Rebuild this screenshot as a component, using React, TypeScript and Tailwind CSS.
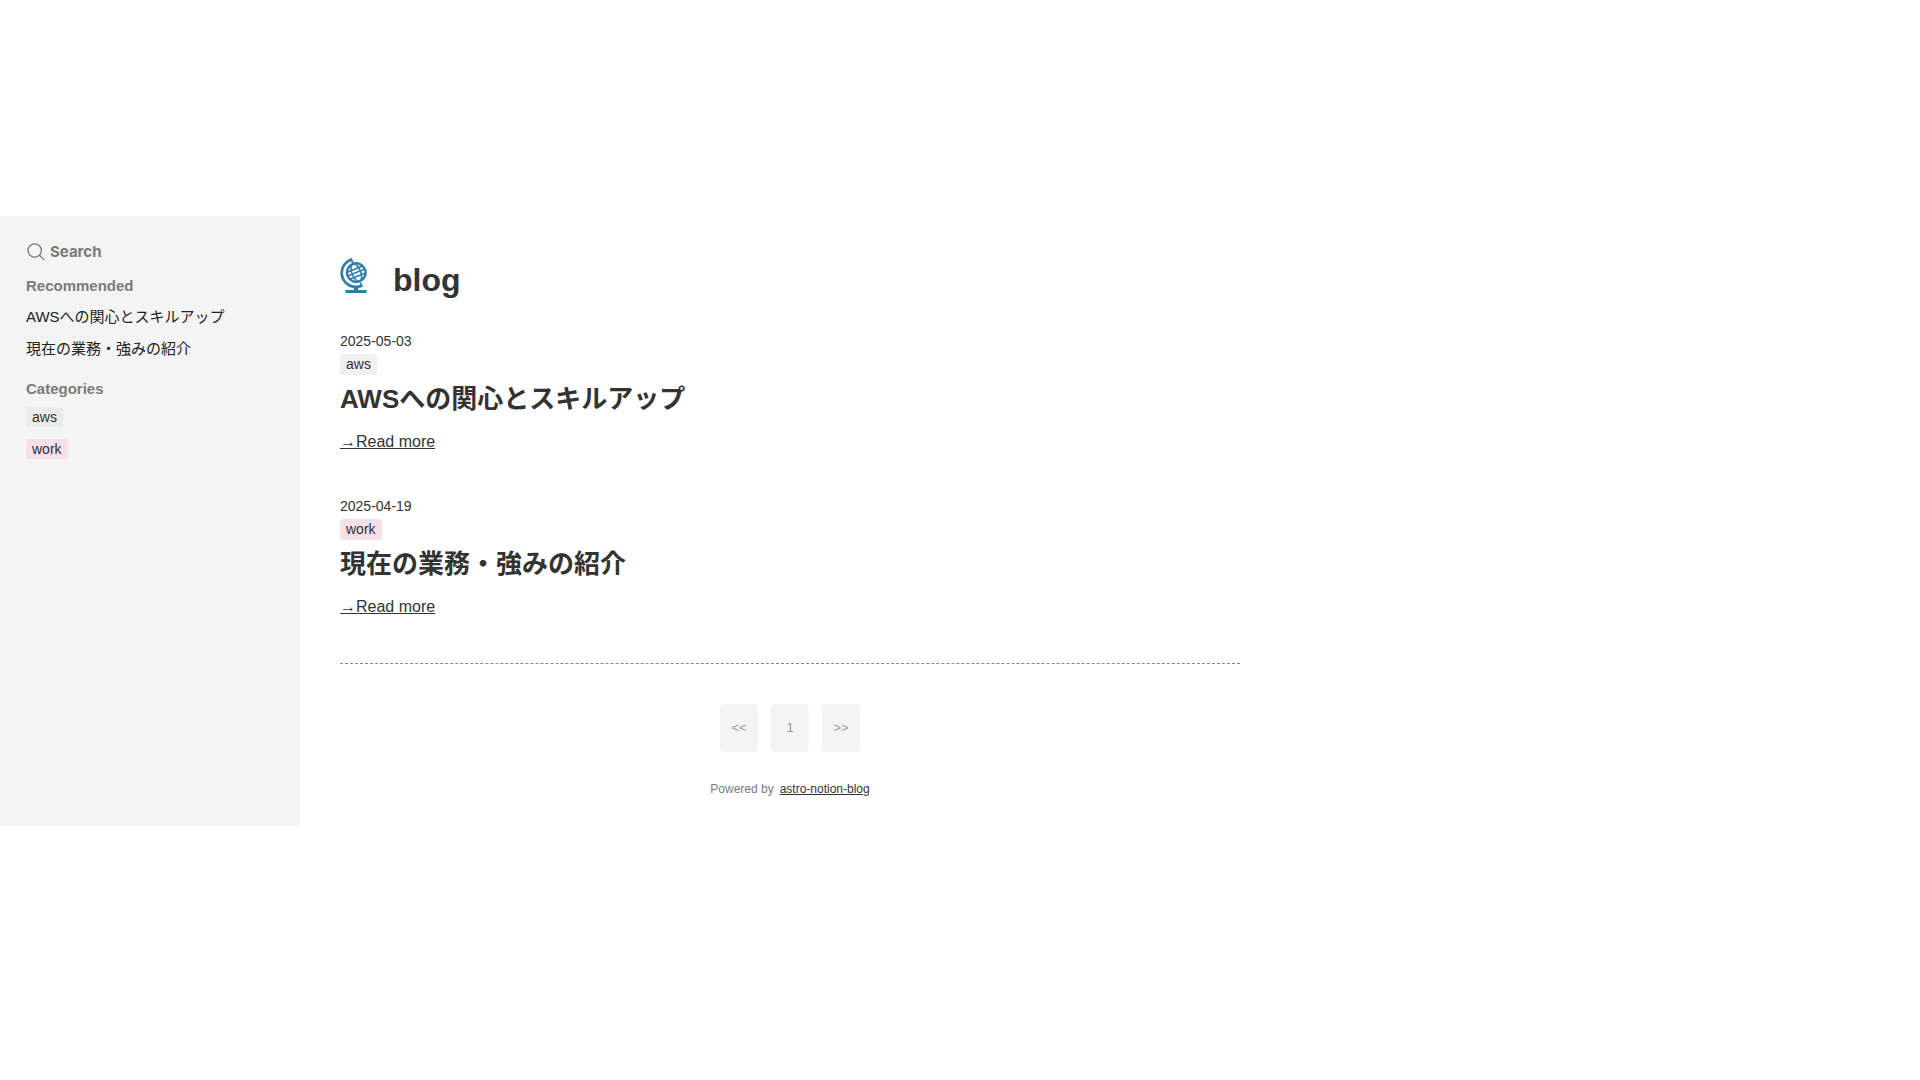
import React from 'react';

type TagColor = 'gray' | 'pink';

interface Tag {
  name: string;
  color: TagColor;
}

interface Post {
  title: string;
  date: string;
  tag: Tag;
}

const tagColors: Record<TagColor, string> = {
  gray: 'bg-[#e3e2e080]',
  pink: 'bg-[#f5e0e9]',
};

const posts: Post[] = [
  { title: 'AWSへの関心とスキルアップ', date: '2025-05-03', tag: { name: 'aws', color: 'gray' } },
  { title: '現在の業務・強みの紹介', date: '2025-04-19', tag: { name: 'work', color: 'pink' } },
];

const SearchIcon: React.FC = () => (
  <svg className="h-5 w-5" viewBox="0 0 20 20" fill="none" stroke="#7b7b7b" strokeWidth="1.3" aria-hidden="true">
    <circle cx="8.7" cy="8.5" r="6.7" />
    <path d="M13.5 13.3 18.5 18.4" />
  </svg>
);

const GlobeIcon: React.FC = () => (
  <svg className="h-[35px] w-[27px]" viewBox="0 0 27 35" fill="none" stroke="#337ea9" aria-hidden="true">
    {/* stand */}
    <path d="M11 1.6A13.8 13.8 0 0 0 1.7 14.8C1.7 22.7 8 29 16 29C18 29 19.9 28.6 21.6 27.8" strokeWidth="2.8" />
    <path d="M11 .4 12.8 5M20.4 24.6 22.2 28.8" strokeWidth="1.8" />
    <path d="M16 29v4" strokeWidth="4.5" />
    <path d="M5.4 33.5H26.7" strokeWidth="3" />
    {/* sphere */}
    <g transform="rotate(-22 16.3 14.6)" strokeWidth="1.6">
      <circle cx="16.3" cy="14.6" r="9.3" strokeWidth="2.4" />
      <ellipse cx="16.3" cy="14.6" rx="4.4" ry="9.3" />
      <path d="M8 10.8H24.6M7 14.6H25.6M8 18.4H24.6" />
    </g>
  </svg>
);

const TagLink: React.FC<{ tag: Tag; className: string }> = ({ tag, className }) => (
  <a href="#" className={`inline-block rounded-[3px] px-1.5 text-[14px] text-[#32302c] ${tagColors[tag.color]} ${className}`}>
    {tag.name}
  </a>
);

const Sidebar: React.FC = () => (
  <aside className="w-[300px] shrink-0 bg-[#f4f4f4] px-[26px] pt-[26px]">
    <button type="button" className="flex h-5 items-center gap-1 font-[Inter,sans-serif] text-[15px] font-bold text-[#7b7b7b]">
      <SearchIcon />
      Search
    </button>

    <h3 className="mt-3.5 text-[15px] leading-5 font-bold text-[#7b7b7b]">Recommended</h3>
    <ul className="mt-[5px] text-[15px] leading-8 text-[#222]">
      {posts.map((post) => (
        <li key={post.title}>
          <a href="#" className="block">{post.title}</a>
        </li>
      ))}
    </ul>

    <h3 className="mt-3.5 text-[15px] leading-5 font-bold text-[#7b7b7b]">Categories</h3>
    <ul className="mt-2 flex flex-col items-start gap-3">
      {posts.map((post) => (
        <li key={post.tag.name} className="flex">
          <TagLink tag={post.tag} className="leading-5" />
        </li>
      ))}
    </ul>
  </aside>
);

const PostItem: React.FC<{ post: Post }> = ({ post }) => (
  <article className="flex flex-col items-start">
    <time className="text-[14px] leading-6" dateTime={post.date}>{post.date}</time>
    <TagLink tag={post.tag} className="mt-px leading-[21px]" />
    <h2 className="mt-1 text-[26px] leading-10 font-bold">
      <a href="#">{post.title}</a>
    </h2>
    <a href="#" className="mt-[11px] text-[16px] leading-6 underline">→Read more</a>
  </article>
);

const Pagination: React.FC = () => (
  <nav aria-label="Pagination" className="mt-10 flex justify-center gap-[13px]">
    {['<<', '1', '>>'].map((label) => (
      <button key={label} type="button" className="h-12 w-[38px] rounded bg-[#f4f4f4] text-[13px] text-[#999]">
        {label}
      </button>
    ))}
  </nav>
);

export default function App() {
  return (
    <div className="flex pt-[20vh] font-['Liberation_Sans','Noto_Sans_CJK_JP',sans-serif] text-[#333]">
      <Sidebar />
      <main className="ml-10 w-full max-w-[900px] pt-10 pb-[25px]">
        <header className="mb-[25px] flex items-start gap-[26px]">
          <span className="mt-0.5">
            <GlobeIcon />
          </span>
          <h1 className="text-[32px] leading-12 font-bold">
            <a href="#">blog</a>
          </h1>
        </header>

        <div className="mb-11 flex flex-col gap-10">
          {posts.map((post) => (
            <PostItem key={post.title} post={post} />
          ))}
        </div>

        <hr className="border-t border-dashed border-[#888]" />
        <Pagination />

        <footer className="mt-[25px] flex justify-center gap-1.5 text-[12px] leading-6 text-[#7b7b7b]">
          <span>Powered by</span>
          <a href="#" className="text-[#333] underline">astro-notion-blog</a>
        </footer>
      </main>
    </div>
  );
}
